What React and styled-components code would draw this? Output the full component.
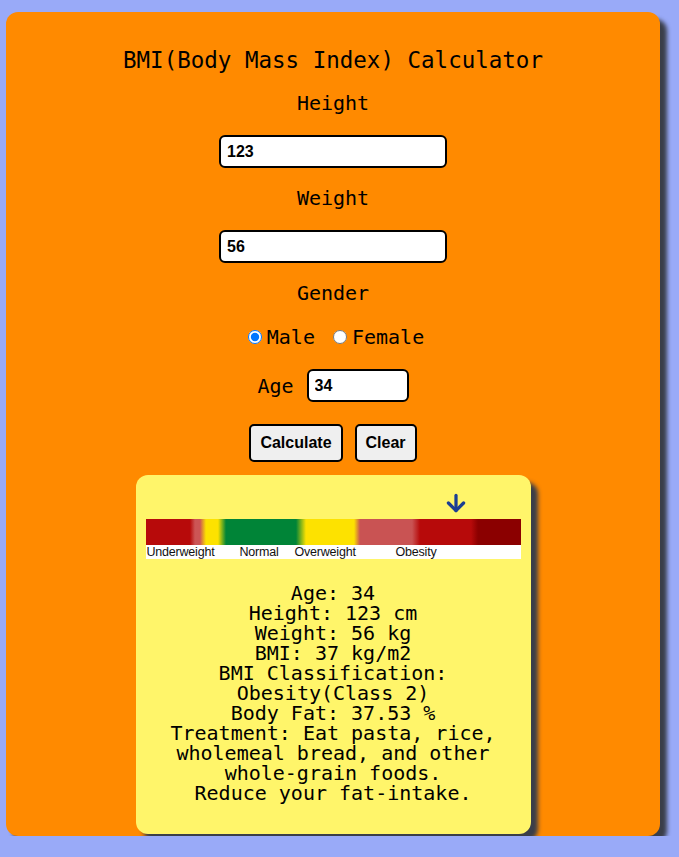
import styled, { createGlobalStyle } from "styled-components";
import { ArrowDown } from "lucide-react";

const GlobalStyle = createGlobalStyle`
  html, body {
    margin: 0;
    background-color: #99aaf8;
  }
  body {
    font-family: "DejaVu Sans Mono", "Liberation Mono", monospace;
  }
`;

const scale = [
  { label: "Underweight", left: 1 },
  { label: "Normal", left: 94 },
  { label: "Overweight", left: 149 },
  { label: "Obesity", left: 250 },
];

const results = [
  "Age: 34",
  "Height: 123 cm",
  "Weight: 56 kg",
  "BMI: 37 kg/m2",
  "BMI Classification:",
  "Obesity(Class 2)",
  "Body Fat: 37.53 %",
  "Treatment: Eat pasta, rice,",
  "wholemeal bread, and other",
  "whole-grain foods.",
  "Reduce your fat-intake.",
];

const App = () => {
  return (
    <>
      <GlobalStyle />
      <Card>
        <Title>BMI(Body Mass Index) Calculator</Title>
        <Label>Height</Label>
        <Input defaultValue="123" />
        <Label>Weight</Label>
        <Input defaultValue="56" />
        <Label>Gender</Label>
        <RadioRow>
          <RadioLabel>
            <input type="radio" name="gender" defaultChecked />
            Male
          </RadioLabel>
          <RadioLabel>
            <input type="radio" name="gender" />
            Female
          </RadioLabel>
        </RadioRow>
        <AgeRow>
          <AgeLabel>Age</AgeLabel>
          <Input defaultValue="34" width={102} />
        </AgeRow>
        <Buttons>
          <Btn>Calculate</Btn>
          <Btn>Clear</Btn>
        </Buttons>
        <Result>
          <Pointer offset={297}>
            <ArrowDown size={26} strokeWidth={3} color="#1b3e92" />
          </Pointer>
          <Scale>
            <Bar />
            <Legend>
              {scale.map((s) => (
                <LegendItem key={s.label} style={{ left: s.left }}>
                  {s.label}
                </LegendItem>
              ))}
            </Legend>
          </Scale>
          <Lines>
            {results.map((line) => (
              <div key={line}>{line}</div>
            ))}
          </Lines>
        </Result>
      </Card>
    </>
  );
};

const Card = styled.div`
  width: 654px;
  margin: 12px 0 0 6px;
  padding: 35px 0 2px;
  box-sizing: border-box;
  background-color: #ff8a00;
  border-radius: 12px;
  box-shadow: 7px 7px 4px #3a3e49;
  display: flex;
  flex-direction: column;
  align-items: center;
  color: #000;
`;

const Title = styled.h1`
  margin: 0 0 19px;
  font-size: 22.5px;
  font-weight: 400;
  line-height: 26px;
`;

const Label = styled.div`
  font-size: 20px;
  line-height: 22px;
  margin-bottom: 21px;
`;

const Input = styled.input`
  width: ${(p) => p.width || 228}px;
  height: 33px;
  box-sizing: border-box;
  border: 2px solid #000;
  border-radius: 6px;
  padding: 0 6px;
  font-family: "Liberation Sans", Arial, sans-serif;
  font-size: 16px;
  font-weight: 700;
  color: #000;
  background: #fff;
  margin-bottom: 19px;
  outline: none;
`;

const RadioRow = styled.div`
  display: flex;
  gap: 18px;
  height: 22px;
  align-items: center;
  margin: 1px 0 21px;
  padding-left: 6px;
  font-size: 20px;
`;

const RadioLabel = styled.label`
  display: flex;
  align-items: center;
  input {
    margin: 0 5px 0 0;
    width: 14px;
    height: 14px;
  }
`;

const AgeRow = styled.div`
  display: flex;
  align-items: center;
  gap: 13px;
  margin-bottom: 3px;
  input {
    margin-bottom: 0;
  }
`;

const AgeLabel = styled.span`
  font-size: 20px;
`;

const Buttons = styled.div`
  display: flex;
  gap: 12px;
  margin: 19px 0 13px;
`;

const Btn = styled.button`
  height: 38px;
  padding: 0 9px;
  border: 2px solid #000;
  border-radius: 5px;
  background-color: #efefef;
  font-family: "Liberation Sans", Arial, sans-serif;
  font-size: 16px;
  font-weight: 700;
  color: #000;
`;

const Result = styled.div`
  width: 395px;
  box-sizing: border-box;
  padding: 12px 10px 31px;
  background-color: #fff56a;
  border-radius: 12px;
  box-shadow: 7px 7px 4px #3a3e49;
`;

const Pointer = styled.div`
  height: 32px;
  padding-left: ${(p) => p.offset}px;
  display: flex;
  align-items: center;
`;

const Scale = styled.div`
  width: 375px;
`;

const Bar = styled.div`
  height: 26px;
  background: linear-gradient(
    to right,
    #b70a0a 0px,
    #b70a0a 44px,
    #cc5555 49px,
    #cc5555 54px,
    #fde200 60px,
    #fde200 72px,
    #008437 80px,
    #008437 150px,
    #fde200 160px,
    #fde200 208px,
    #c95353 214px,
    #c95353 266px,
    #b70a0a 274px,
    #b70a0a 325px,
    #8b0000 332px,
    #8b0000 375px
  );
`;

const Legend = styled.div`
  position: relative;
  height: 14px;
  background: #fff;
`;

const LegendItem = styled.span`
  position: absolute;
  top: 0;
  font-family: "Liberation Sans", Arial, sans-serif;
  font-size: 12.5px;
  line-height: 14px;
  color: #111;
  letter-spacing: -0.2px;
`;

const Lines = styled.div`
  margin-top: 24px;
  text-align: center;
  font-size: 20px;
  line-height: 20px;
`;

export default App;
